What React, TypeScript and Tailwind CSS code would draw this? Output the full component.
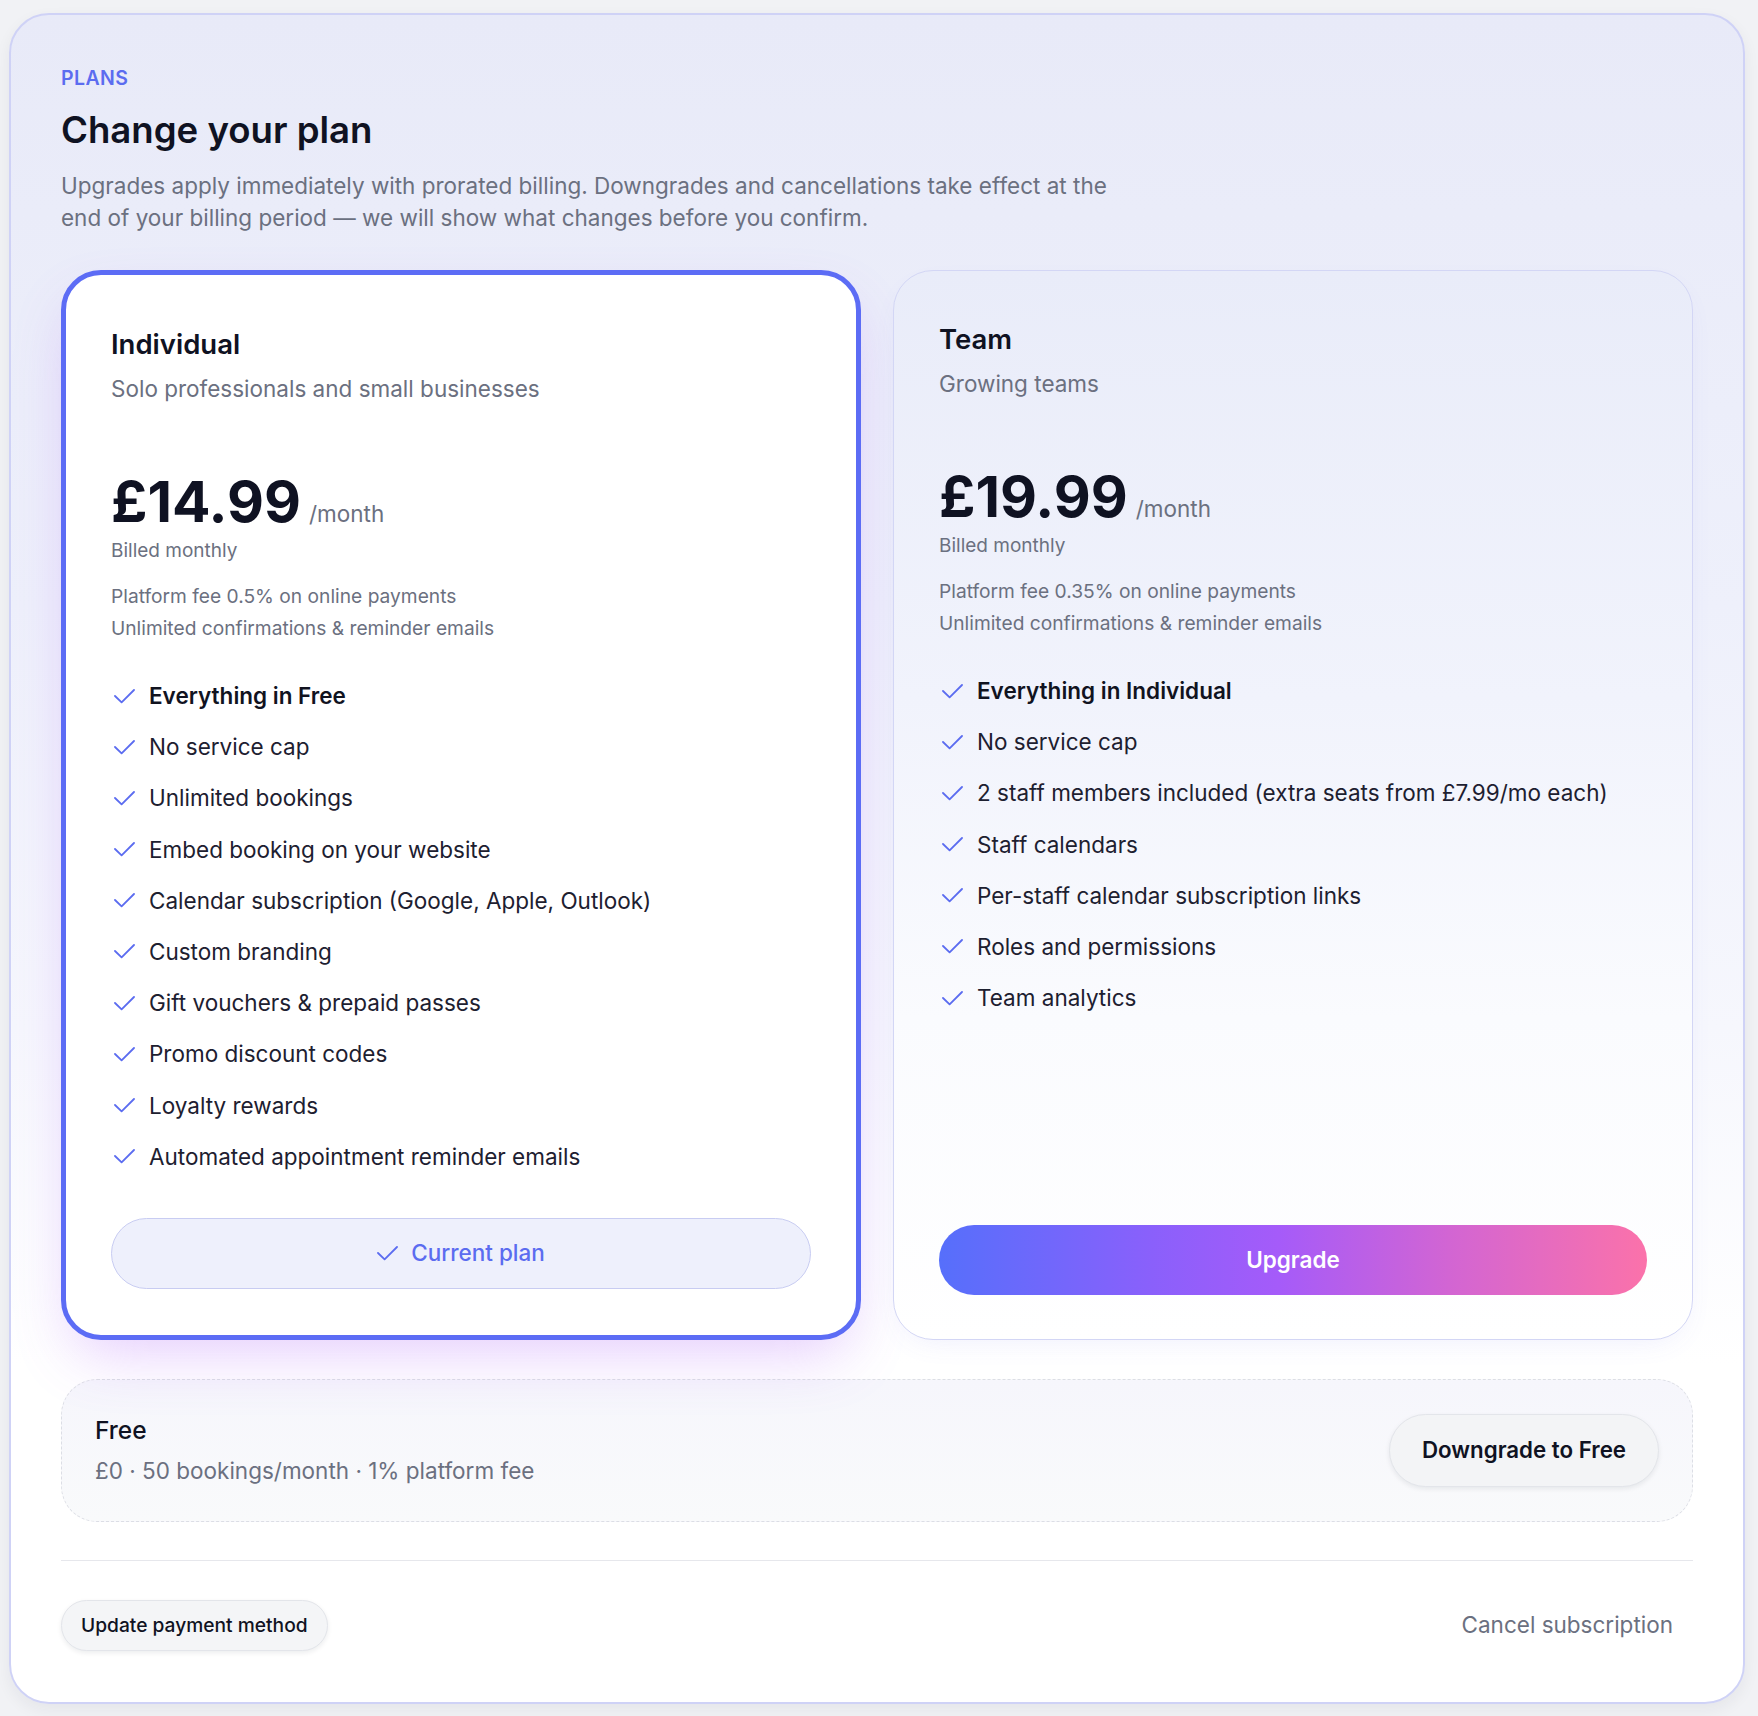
import React from "react";

const FONT_STACK = '"Inter", "Noto Sans", "Liberation Sans", sans-serif';

function CheckMark({ className = "" }: { className?: string }) {
  return (
    <svg
      width="21"
      height="15"
      viewBox="0 0 21 15"
      fill="none"
      className={className}
      aria-hidden="true"
    >
      <path
        d="M1 7 L7.6 13.4 L20 1"
        stroke="currentColor"
        strokeWidth="1.8"
        strokeLinecap="round"
        strokeLinejoin="round"
      />
    </svg>
  );
}

type Feature = { label: string; strong?: boolean };

const individualFeatures: Feature[] = [
  { label: "Everything in Free", strong: true },
  { label: "No service cap" },
  { label: "Unlimited bookings" },
  { label: "Embed booking on your website" },
  { label: "Calendar subscription (Google, Apple, Outlook)" },
  { label: "Custom branding" },
  { label: "Gift vouchers & prepaid passes" },
  { label: "Promo discount codes" },
  { label: "Loyalty rewards" },
  { label: "Automated appointment reminder emails" },
];

const teamFeatures: Feature[] = [
  { label: "Everything in Individual", strong: true },
  { label: "No service cap" },
  { label: "2 staff members included (extra seats from £7.99/mo each)" },
  { label: "Staff calendars" },
  { label: "Per-staff calendar subscription links" },
  { label: "Roles and permissions" },
  { label: "Team analytics" },
];

function FeatureList({ items }: { items: Feature[] }) {
  return (
    <ul className="mt-[36px] flex flex-col gap-[19.2px]">
      {items.map((f) => (
        <li key={f.label} className="flex items-center text-[22.5px] leading-[32px]">
          <CheckMark className="ml-[3px] mr-[14px] shrink-0 text-[#5b6cf0]" />
          <span
            className={
              f.strong ? "font-semibold text-[#11131f]" : "font-normal text-[#1d2030]"
            }
          >
            {f.label}
          </span>
        </li>
      ))}
    </ul>
  );
}

function PlanHeader({
  name,
  tagline,
  price,
  fee,
}: {
  name: string;
  tagline: string;
  price: string;
  fee: string;
}) {
  return (
    <>
      <h2 className="text-[27.5px] leading-[36px] font-semibold text-[#0f1222]">{name}</h2>
      <p className="mt-[12px] text-[22.5px] leading-[30px] text-[#6b7080]">{tagline}</p>
      <div className="mt-[69.5px] flex items-baseline gap-[8px]">
        <span className="text-[57px] leading-[56px] font-bold text-[#0f1222]">{price}</span>
        <span className="text-[22.5px] leading-[30px] text-[#6b7080]">/month</span>
      </div>
      <p className="mt-[8.5px] text-[19px] leading-[26px] text-[#6b7080]">Billed monthly</p>
      <div className="mt-[16px] text-[19.2px] leading-[32px] text-[#6b7080]">
        <p>{fee}</p>
        <p>Unlimited confirmations &amp; reminder emails</p>
      </div>
    </>
  );
}

export default function App() {
  return (
    <div
      className="min-h-[1716px] w-full bg-[#f1f2f5] pl-[9px] pt-[13px] pb-[12px]"
      style={{ fontFamily: FONT_STACK }}
    >
      <div className="w-[1736px] rounded-[40px] border-2 border-[#cfd2f6] bg-[linear-gradient(180deg,#e8eaf8_0%,#eef0fb_35%,#f6f7fd_60%,#ffffff_80%)] px-[50px] pt-[50px] pb-[51px] shadow-[0_6px_16px_rgba(30,41,59,0.06)]">
        {/* Heading */}
        <p className="text-[19.5px] leading-[26px] font-semibold tracking-[0.02em] text-[#5b6cf0]">
          PLANS
        </p>
        <h1 className="mt-[17px] text-[36.6px] leading-[44px] font-semibold text-[#0f1222]">
          Change your plan
        </h1>
        <p className="mt-[17.5px] max-w-[1060px] text-[22.5px] leading-[32px] text-[#6b7080]">
          Upgrades apply immediately with prorated billing. Downgrades and cancellations take
          effect at the end of your billing period — we will show what changes before you
          confirm.
        </p>

        {/* Plan cards */}
        <div className="mt-[36.5px] grid grid-cols-2 gap-[32px]">
          <div className="flex flex-col rounded-[40px] border-[5px] border-[#5c6cf5] bg-white px-[45px] pt-[51px] pb-[46px] shadow-[0_26px_60px_-14px_rgba(168,85,247,0.30)]">
            <PlanHeader
              name="Individual"
              tagline="Solo professionals and small businesses"
              price="£14.99"
              fee="Platform fee 0.5% on online payments"
            />
            <FeatureList items={individualFeatures} />
            <div className="min-h-[45px] flex-1" />
            <button
              type="button"
              className="flex h-[71px] w-full items-center justify-center gap-[13px] rounded-full border border-[#c8ccf2] bg-[#eef0fc] text-[22.5px] font-medium text-[#5b6cf0]"
            >
              <CheckMark className="text-[#5b6cf0]" />
              <span>Current plan</span>
            </button>
          </div>

          <div className="flex flex-col rounded-[40px] border border-[#d3d6f5] bg-[linear-gradient(180deg,#e9ecf9_0%,#f1f3fc_40%,#fafbfe_70%,#ffffff_100%)] px-[45px] pt-[50px] pb-[44px] shadow-[0_10px_30px_-12px_rgba(99,102,241,0.12)]">
            <PlanHeader
              name="Team"
              tagline="Growing teams"
              price="£19.99"
              fee="Platform fee 0.35% on online payments"
            />
            <FeatureList items={teamFeatures} />
            <div className="min-h-[45px] flex-1" />
            <button
              type="button"
              className="flex h-[70px] w-full items-center justify-center rounded-full bg-[linear-gradient(90deg,#566ffb_0%,#8a60fb_30%,#a55bf9_48%,#d265d3_72%,#fb72aa_100%)] text-[22.5px] font-semibold text-white"
            >
              Upgrade
            </button>
          </div>
        </div>

        {/* Free tier */}
        <div className="mt-[39px] flex items-center justify-between rounded-[36px] border border-dashed border-[#dcdee5] bg-[linear-gradient(180deg,#f6f6fc_0%,#f9fafb_100%)] px-[33px] py-[34px]">
          <div>
            <p className="text-[24.5px] leading-[32px] font-medium text-[#0f1222]">Free</p>
            <p className="mt-[10.5px] text-[22.5px] leading-[30px] text-[#6b7080]">
              £0 · 50 bookings/month · 1% platform fee
            </p>
          </div>
          <button
            type="button"
            className="flex h-[73px] items-center rounded-full border border-[#e3e5ea] bg-[#f3f4f6] px-[32px] text-[22.3px] font-semibold text-[#0f1222] shadow-[0_2px_5px_rgba(15,23,42,0.08)]"
          >
            Downgrade to Free
          </button>
        </div>

        <div className="mt-[38px] border-t border-[#e6e7ec]" />

        {/* Footer actions */}
        <div className="mt-[39px] flex items-center justify-between">
          <button
            type="button"
            className="flex h-[51px] items-center rounded-full border border-[#e3e5ea] bg-[#f4f5f7] px-[19px] text-[19.2px] font-medium text-[#0f1222] shadow-[0_2px_5px_rgba(15,23,42,0.08)]"
          >
            Update payment method
          </button>
          <button
            type="button"
            className="px-[20px] text-[22.5px] leading-[32px] text-[#6b7080]"
          >
            Cancel subscription
          </button>
        </div>
      </div>
    </div>
  );
}
